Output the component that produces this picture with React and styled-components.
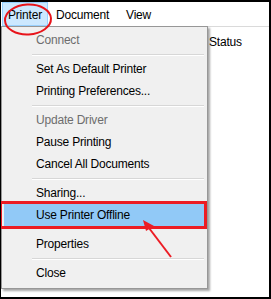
import styled, { createGlobalStyle } from 'styled-components';

const GlobalStyle = createGlobalStyle`
body {
  margin: 0;
  background: #fff;
  font-family: "Liberation Sans", Arial, sans-serif;
  font-size: 12px;
  letter-spacing: -0.2px;
  color: #000;
}
`

const Frame = styled.div`
position: relative;
width: 271px;
height: 299px;
box-sizing: border-box;
border: 2px solid #000;
border-left-width: 1px;
background: #fff;
overflow: hidden;
`

const MenuBar = styled.div`
display: flex;
gap: 2px;
height: 24px;
border-bottom: 1px solid #dadada;
padding-left: 1px;
`

const BarItem = styled.div`
display: flex;
align-items: center;
padding: 1px ${p => p.$pad || 5}px 0 5px;
box-sizing: border-box;
border: 1px solid ${p => (p.$open ? '#99d1ff' : 'transparent')};
background: ${p => (p.$open ? '#cce8ff' : 'transparent')};
`

const ListHeader = styled.div`
display: flex;
height: 30px;
align-items: center;
padding-left: 208px;
`

const Column = styled.div`
width: 60px;
`

const Dropdown = styled.div`
position: absolute;
left: 0;
top: 24px;
width: 207px;
box-sizing: border-box;
padding: 2px 0 4px;
background: #f0f0f0;
border: 1px solid #979797;
box-shadow: 2px 2px 2px rgba(0, 0, 0, 0.35);
`

const Item = styled.div`
position: relative;
height: 22px;
line-height: 23px;
padding-left: ${p => (p.$hover ? 32 : 34)}px;
margin: ${p => (p.$hover ? '0 3px 7px 2px' : '0')};
color: ${p => (p.$disabled ? '#6d6d6d' : '#000')};
background: ${p => (p.$hover ? '#91c9f7' : 'transparent')};
`

const Separator = styled.div`
height: 1px;
margin: 3px 3px 2px 30px;
background: #d7d7d7;
border-bottom: 1px solid #fff;
`

const RedBox = styled.div`
position: absolute;
left: -5px;
right: -3px;
top: -3px;
bottom: -3px;
border: 3px solid #ec1c24;
`

const Annotation = styled.svg`
position: absolute;
left: 0;
top: 0;
pointer-events: none;
`

const App = () => {
    return (
        <Frame>
            <GlobalStyle />
            <MenuBar>
                <BarItem $open>Printer</BarItem>
                <BarItem $pad={8}>Document</BarItem>
                <BarItem>View</BarItem>
            </MenuBar>
            <ListHeader>
                <Column>Status</Column>
            </ListHeader>

            <Dropdown>
                <Item $disabled>Connect</Item>
                <Separator />
                <Item>Set As Default Printer</Item>
                <Item>Printing Preferences...</Item>
                <Separator />
                <Item $disabled>Update Driver</Item>
                <Item>Pause Printing</Item>
                <Item>Cancel All Documents</Item>
                <Separator />
                <Item>Sharing...</Item>
                <Item $hover>
                    Use Printer Offline
                    <RedBox />
                </Item>
                <Item>Properties</Item>
                <Separator />
                <Item>Close</Item>
            </Dropdown>

            {/* red marks drawn over the screenshot */}
            <Annotation width="271" height="299" viewBox="0 0 271 299">
                <ellipse cx="27" cy="17.5" rx="23" ry="15" fill="none" stroke="#e8141b" strokeWidth="2" transform="rotate(-3 27 17.5)" />
                <line x1="170" y1="255" x2="148" y2="226" stroke="#ec1c24" strokeWidth="2" />
                <polygon points="142,218 153,224 145,229" fill="#ec1c24" />
            </Annotation>
        </Frame>
    );
}
export default App;
